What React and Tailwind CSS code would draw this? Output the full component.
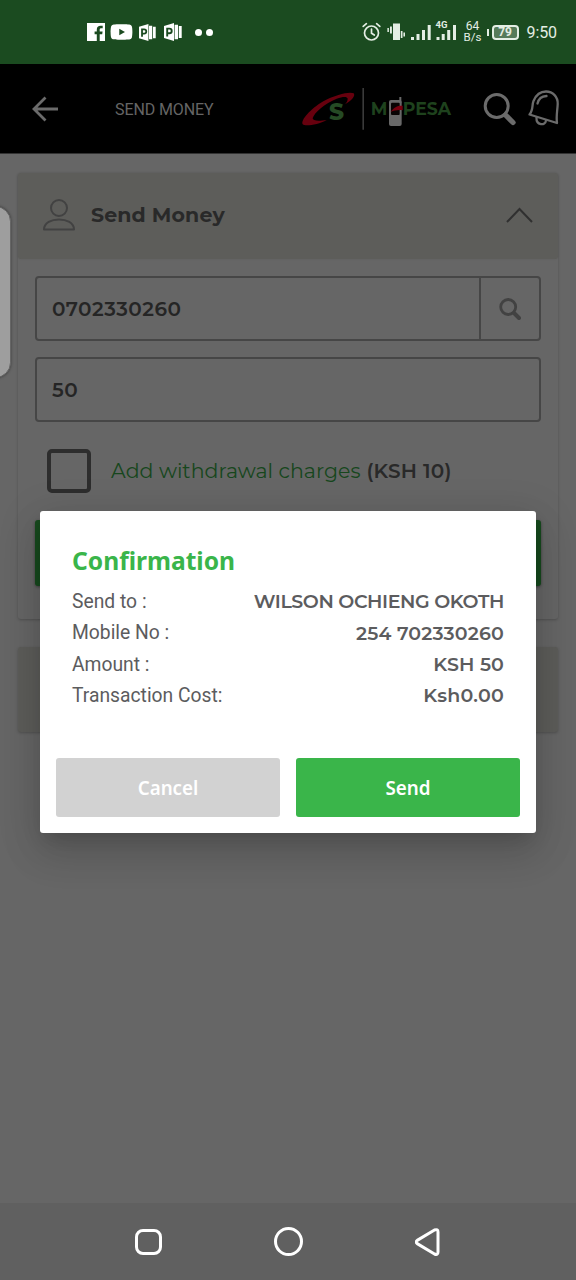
import React, { useState } from 'react';
import { FaYoutube } from 'react-icons/fa';

const details = [
  { label: 'Send to :', value: 'WILSON OCHIENG OKOTH', tracking: 'tracking-[-0.4px]' },
  { label: 'Mobile No :', value: '254 702330260', tracking: 'tracking-[0.17px]' },
  { label: 'Amount :', value: 'KSH 50', tracking: 'tracking-[0.1px]' },
  { label: 'Transaction Cost:', value: 'Ksh0.00', tracking: 'tracking-[0.25px]' },
];

const PublisherIcon = ({ className }) => (
  <svg className={className} viewBox="0 0 18 18" fill="none">
    <path d="M0 3 L10 0 V18 L0 15 Z" fill="#fff" />
    <path d="M10.6 1.8 H14 V16.2 H10.6 Z M14.8 3 H17.7 V15 H14.8 Z" fill="#fff" />
    <path d="M3.2 13.5 V5.6 H5.4 A2.3 2.3 0 0 1 5.4 10.2 H3.2" stroke="#1b4b20" strokeWidth="1.9" />
  </svg>
);

const StatusBar = () => (
  <div className="h-16 bg-[#1b4b20] flex items-center text-white font-['Roboto',sans-serif]">
    <div className="flex items-center ml-[87px]">
      {/* Facebook */}
      <svg className="w-[18px] h-[18px]" viewBox="0 0 18 18">
        <path d="M0 0 H18 V18 H0 Z" fill="#fff" />
        <path d="M9.8 18 V11.2 H7.6 V8.5 H9.8 V6.6 C9.8 4 11.3 2.8 13.5 2.8 H15.7 V5.3 H14.2 C13.1 5.3 12.7 5.8 12.7 6.8 V8.5 H15.6 L15.2 11.2 H12.7 V18 Z" fill="#1b4b20" />
      </svg>
      <FaYoutube className="w-[23px] h-[22px] ml-[5px]" />
      <PublisherIcon className="w-[17px] h-[17px] ml-1.5" />
      <PublisherIcon className="w-[18px] h-[18px] ml-[8px]" />
      <span className="w-[7px] h-[7px] rounded-full bg-white ml-[13px]" />
      <span className="w-[7px] h-[7px] rounded-full bg-white ml-1" />
    </div>

    <div className="flex items-center ml-auto mr-[19px] text-[#e4eee4]">
      {/* Alarm */}
      <svg className="w-[19px] h-5 mr-px" viewBox="0 0 19 20" fill="none" stroke="currentColor" strokeWidth="1.7" strokeLinecap="round">
        <circle cx="9.5" cy="11" r="7" />
        <path d="M9.5 7 V11.2 L12.3 13 M1.2 4.4 L4.4 1.7 M17.8 4.4 L14.6 1.7" />
      </svg>
      {/* Vibrate */}
      <svg className="w-[19px] h-5 ml-[5px]" viewBox="0 0 19 20" fill="currentColor">
        <path d="M6 1.5 H13 V18 H6 Z M3 4.5 H4.9 V11.5 H3 Z M.4 6 H1.9 V10 H.4 Z M13.8 9 H15.5 V16 H13.8 Z M16.4 10.5 H18 V14.5 H16.4 Z" />
      </svg>
      {/* Signals */}
      <svg className="w-[46px] h-6 ml-[4px]" viewBox="0 0 46 24" fill="currentColor">
        <path d="M1 17 h3 v3 h-3z M6.5 14 h3 v6 h-3z M12 10 h3 v10 h-3z M17.7 5 h3 v15 h-3z" />
        <path d="M26.5 17 h3 v3 h-3z M31.7 14 h3 v6 h-3z M37.2 10 h3 v10 h-3z M43 5 h3 v15 h-3z" />
        <text x="25.5" y="7.5" fontSize="9.5" fontWeight="700" fontFamily="Roboto">4G</text>
      </svg>
      <div className="w-[18px] ml-[8px] flex flex-col items-center text-[11.5px] leading-[11.5px]">
        <span className="text-[12px]">64</span>
        <span className="whitespace-nowrap">B/s</span>
      </div>
      <span className="w-0.5 h-[7px] bg-current ml-[5px]" />
      <div className="ml-[3px] w-[27px] h-[15px] rounded-[4px] border-2 border-current bg-[#567b59] flex items-center justify-center text-[12px] font-bold leading-none">79</div>
      <span className="text-[16px] tracking-[-0.1px] leading-5 ml-[8px] translate-y-px">9:50</span>
    </div>
  </div>
);

const MpesaLogo = () => (
  <svg className="w-[153px] h-[46px]" viewBox="30 45 459 138" fontFamily="Montserrat, Inter, sans-serif">
    <path
      d="M165 103 C186 91 197 78 191 70 C180 64 140 72 100 94 C60 118 32 150 38 163 C46 170 85 164 110 150 C85 154 68 153 68 145 C72 128 105 100 140 86 C160 79 172 80 173 86 C173 92 170 98 165 103Z"
      fill="#67000e"
    />
    <text x="117" y="151" fontSize="70" fontWeight="800" fill="#254a24" textLength="45" lengthAdjust="spacingAndGlyphs">S</text>
    <path d="M219.5 54 V179" stroke="#464646" strokeWidth="4" />
    <text x="242" y="135" fontSize="52" fontWeight="700" fill="#1e421d" textLength="50" lengthAdjust="spacingAndGlyphs">M</text>
    <rect x="297" y="90" width="38" height="78" rx="6" fill="#686868" />
    <path d="M328 81 H334 V100 H328Z" fill="#686868" />
    <rect x="303" y="98" width="26" height="37" rx="3" fill="#080303" />
    <path d="M302 126 C312 111 323 106 338 107 V121 C326 119 313 121 302 126Z" fill="#78000f" />
    <text x="338" y="135" fontSize="52" fontWeight="700" fill="#1e421d" textLength="145" lengthAdjust="spacingAndGlyphs">PESA</text>
  </svg>
);

const Header = () => (
  <div className="h-[90px] bg-black flex items-center text-[#6b6b6b] border-b border-[#333]">
    <svg className="w-[27px] h-[26px] ml-[32px]" viewBox="0 0 27 26" fill="none" stroke="currentColor" strokeWidth="2.8">
      <path d="M26 13 H2 M13.5 1.5 L2 13 L13.5 24.5" />
    </svg>
    <h1 className="w-[100px] ml-14 mt-0.5 text-[16px] tracking-[-0.1px] whitespace-nowrap font-['Roboto',sans-serif] text-[#656565]">SEND MONEY</h1>
    <div className="ml-[85px] -mt-0.5">
      <MpesaLogo />
    </div>
    <svg className="w-[34px] h-[34px] ml-[30px]" viewBox="0 0 34 34" fill="none" stroke="currentColor">
      <circle cx="13.7" cy="14" r="11.5" strokeWidth="3" />
      <path d="M22.5 23 L30 30.5" strokeWidth="5.2" strokeLinecap="round" />
    </svg>
    <svg className="w-8 h-9 ml-[11px] -mt-0.5" viewBox="0 0 32 36" fill="none" stroke="currentColor" strokeWidth="2.3" strokeLinejoin="round" strokeLinecap="round">
      <path d="M1.5 24.5 C5.5 20 3.8 15 5.5 11 C8 5 12.5 1.5 18 1.5 C25 1.5 30 7 29.7 14 C29.4 21 28 26 29 33 Z" />
      <path d="M8.5 27.5 C8 35.5 17.5 36 18 30.5 M9.5 13.5 C10.5 9 13.5 6.3 18.5 6" />
    </svg>
  </div>
);

const SendMoneyCard = () => {
  const [phone, setPhone] = useState('0702330260');
  const [amount, setAmount] = useState('50');

  return (
    <div className="h-[446px] rounded-[3px] shadow-[0_1px_3px_rgba(0,0,0,0.22)]">
      <div className="h-[86px] bg-[#5d5d5a] rounded-[3px] flex items-center px-[25px] shadow-[0_0_2px_rgba(0,0,0,0.1)]">
        <svg className="w-8 h-8 -mt-0.5" viewBox="0 0 32 32" fill="none" stroke="#424242" strokeWidth="2">
          <circle cx="16" cy="9" r="8" />
          <path d="M1 30.5 C1 17 31 17 31 30.5 Z" strokeLinejoin="round" />
        </svg>
        <h2 className="ml-4 -mt-0.5 text-[20.5px] font-bold tracking-[0.12px] text-[#292929]">Send Money</h2>
        <svg className="w-[27px] h-4 ml-auto -mt-0.5" viewBox="0 0 27 16" fill="none" stroke="#303030" strokeWidth="2">
          <path d="M1 15 L13.5 2 L26 15" />
        </svg>
      </div>

      <div className="px-[17px] pt-[17px]">
        <div className="h-[65px] flex rounded-[4px] border-2 border-[#464646]">
          <input
            className="flex-1 min-w-0 px-[15px] text-[20px] font-semibold tracking-[0.5px] text-[#252525] outline-none"
            value={phone}
            onChange={(e) => setPhone(e.target.value)}
          />
          <button className="w-[60px] border-l-2 border-[#464646] flex items-center justify-center">
            <svg className="w-[22px] h-[22px]" viewBox="0 0 22 22" fill="none" stroke="#424242">
              <circle cx="9.2" cy="9" r="7.5" strokeWidth="2.8" />
              <path d="M15 15 L20 20" strokeWidth="4" strokeLinecap="round" />
            </svg>
          </button>
        </div>
        <input
          className="block w-full h-[65px] mt-4 rounded-[4px] border-2 border-[#464646] px-[15px] text-[20px] font-semibold tracking-[0.5px] text-[#252525] outline-none"
          value={amount}
          onChange={(e) => setAmount(e.target.value)}
        />

        <label className="flex items-center mt-[27px] pl-3">
          <span className="w-11 h-11 rounded-[5px] border-4 border-[#2d2d2d]" />
          <span className="ml-5 text-[20.5px] tracking-[0.03px] text-[#17471d] whitespace-nowrap">Add withdrawal charges</span>
          <span className="ml-1.5 text-[20px] font-semibold tracking-[0.2px] text-[#292929] whitespace-nowrap">(KSH 10)</span>
        </label>

        <button className="block w-full h-[66px] mt-[27px] rounded-[3px] bg-[#174a1e] shadow-[0_1px_3px_rgba(0,0,0,0.4)]" />
      </div>
    </div>
  );
};

const ConfirmationDialog = () => (
  <div className="absolute left-10 top-[511px] w-[496px] h-[322px] rounded-[3px] bg-white px-4 shadow-[0_11px_15px_-7px_rgba(0,0,0,0.12),0_20px_38px_3px_rgba(0,0,0,0.1),0_9px_40px_6px_rgba(0,0,0,0.1)]">
    <div className="px-4 pt-[33px]">
      <h3 className="text-[24.6px] leading-[34px] font-bold text-[#3ab54a] font-['Noto_Sans',sans-serif]">Confirmation</h3>
      <div className="mt-[9px]">
        {details.map((row) => (
          <div key={row.label} className="h-[31.2px] flex items-center justify-between text-[#5c5c5e]">
            <span className="text-[19.3px] font-['Roboto',sans-serif]">{row.label}</span>
            <span className={`text-[19px] font-semibold ${row.tracking}`}>{row.value}</span>
          </div>
        ))}
      </div>
    </div>
    <div className="mt-[46px] grid grid-cols-2 gap-4 text-[18.8px] font-semibold text-white font-['Noto_Sans',sans-serif]">
      <button className="h-[59px] pt-0.5 rounded-[3px] bg-[#d2d2d2]">Cancel</button>
      <button className="h-[59px] pt-0.5 rounded-[3px] bg-[#3ab54a]">Send</button>
    </div>
  </div>
);

const NavBar = () => (
  <div className="h-[77px] bg-[#606060] flex items-center justify-between pl-[135px] pr-[135px] text-white">
    <span className="w-[27px] h-[26px] rounded-[8px] border-[3px] border-white" />
    <span className="w-[29px] h-[29px] rounded-full border-[3px] border-white" />
    <svg className="w-[26px] h-7" viewBox="0 0 26 28" fill="none" stroke="currentColor" strokeWidth="3" strokeLinejoin="round">
      <path d="M2.2 12.4 Q.2 14 2.2 15.6 L19.5 26 Q23 27.5 23 24 V4 Q23 .7 19.5 2 Z" />
    </svg>
  </div>
);

const App = () => (
  <div className="relative w-[576px] h-[1280px] overflow-hidden bg-[#666] flex flex-col font-['Montserrat','Inter',sans-serif]">
    <StatusBar />
    <Header />
    <div className="flex-1 px-[18px] pt-[19px]">
      <SendMoneyCard />
      <div className="mt-7 h-[85px] rounded-[3px] bg-[#5d5d5a] shadow-[0_1px_3px_rgba(0,0,0,0.22)]" />
    </div>
    <NavBar />

    {/* Edge panel handle */}
    <div className="absolute -left-5 top-[206px] w-[31px] h-[172px] rounded-[20px] bg-[#9e9e9e] border border-[#666] shadow-[0_0_3px_rgba(0,0,0,0.4)]" />
    <ConfirmationDialog />
  </div>
);

export default App;
